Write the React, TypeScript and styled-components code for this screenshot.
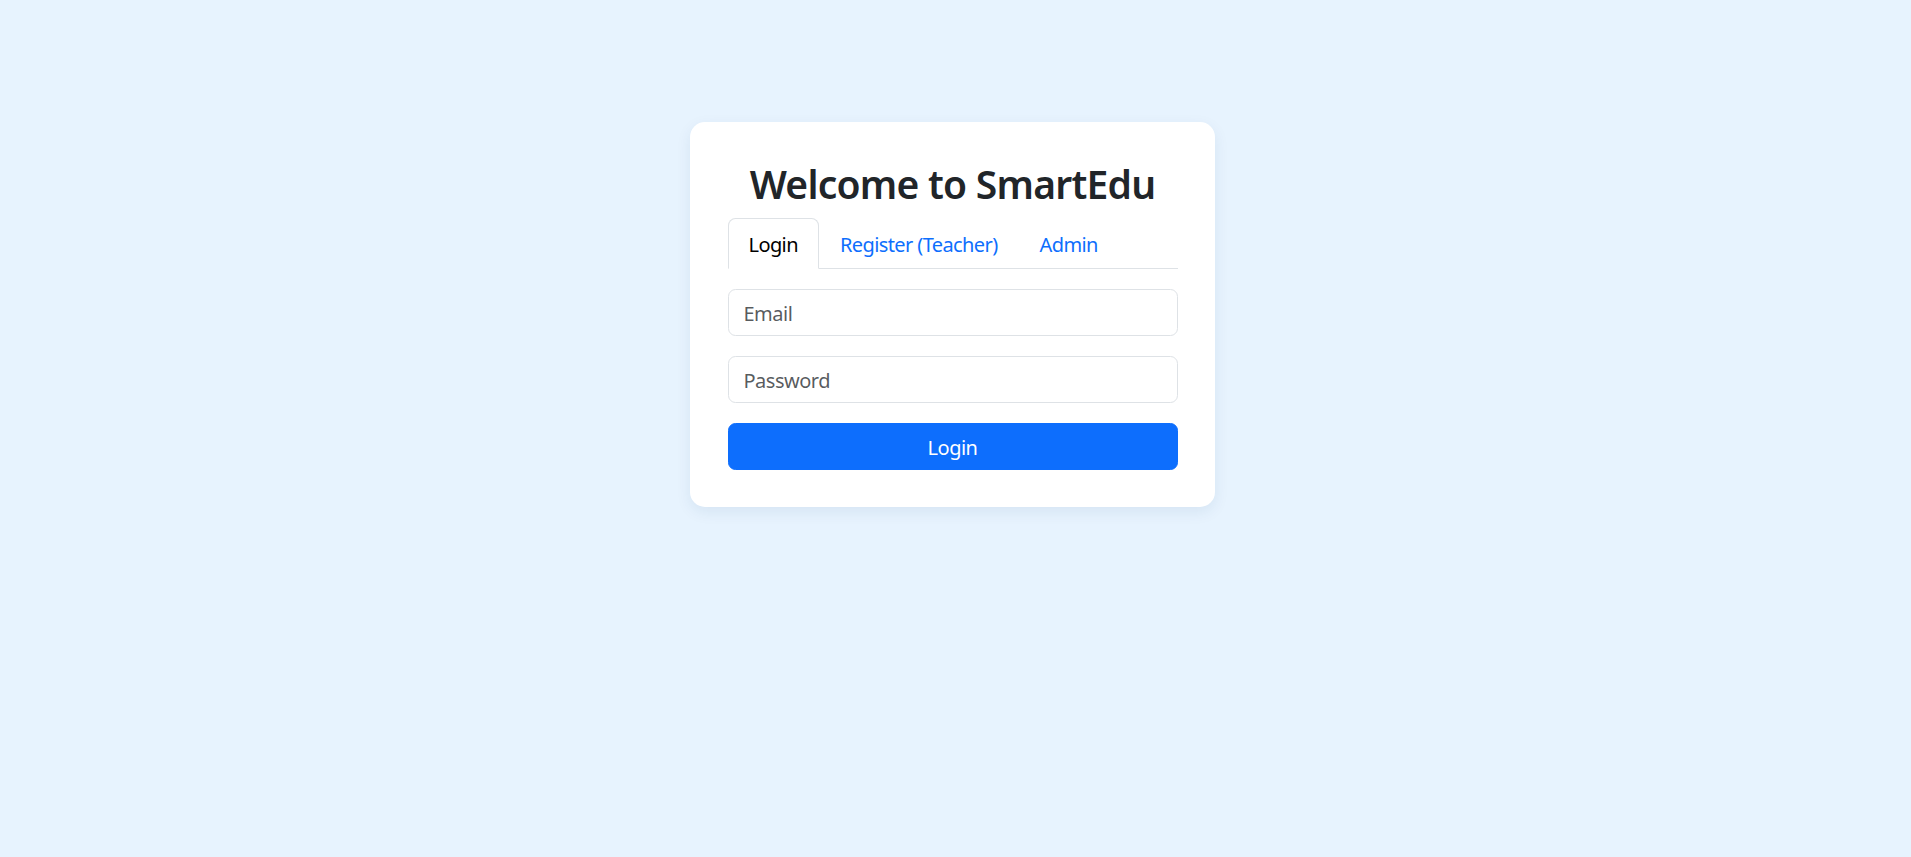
import React, { useState } from "react";
import styled, { createGlobalStyle } from "styled-components";

const GlobalStyle = createGlobalStyle`
  html, body {
    margin: 0;
    padding: 0;
    background: #e7f3fe;
    font-family: "Noto Sans", "Open Sans", Arial, sans-serif;
    color: #212529;
  }
  * { box-sizing: border-box; }
`;

const Page = styled.div`
  min-height: 857px;
  display: flex;
  justify-content: center;
  align-items: flex-start;
  padding-top: 122px;
  padding-right: 6px;
`;

const Card = styled.div`
  width: 525px;
  background: #fff;
  border-radius: 15px;
  padding: 37.5px;
  box-shadow: 0 5px 15px rgba(0, 60, 120, 0.08);
`;

const Title = styled.h2`
  margin: 0 0 10px;
  font-size: 39px;
  line-height: 48px;
  font-weight: 600;
  letter-spacing: -0.75px;
  text-align: center;
  color: #212529;
`;

const Tabs = styled.div`
  display: flex;
  border-bottom: 1px solid #dee2e6;
`;

const Tab = styled.button<{ $active?: boolean }>`
  font-family: inherit;
  font-size: 20px;
  line-height: 30px;
  letter-spacing: -0.6px;
  padding: 11.5px 20px 7.5px;
  margin-bottom: -1px;
  background: ${(p) => (p.$active ? "#fff" : "transparent")};
  color: ${(p) => (p.$active ? "#000" : "#0d6efd")};
  border: 1px solid ${(p) => (p.$active ? "#dee2e6" : "transparent")};
  border-bottom-color: ${(p) => (p.$active ? "#fff" : "transparent")};
  border-radius: 7.5px 7.5px 0 0;
  cursor: pointer;
`;

const Form = styled.form`
  margin-top: 20px;
  display: flex;
  flex-direction: column;
  gap: 20px;
`;

const Input = styled.input`
  width: 100%;
  height: 47px;
  padding: 9px 15px 6px;
  font-family: inherit;
  font-size: 20px;
  letter-spacing: -0.5px;
  color: #212529;
  border: 1px solid #dee2e6;
  border-radius: 7.5px;
  background: #fff;
  outline: none;
  &::placeholder {
    color: rgba(33, 37, 41, 0.75);
  }
`;

const SubmitButton = styled.button`
  width: 100%;
  height: 47px;
  padding: 3px 0 0;
  font-family: inherit;
  font-size: 20px;
  letter-spacing: -0.5px;
  color: #fff;
  background: #0d6efd;
  border: 1px solid #0d6efd;
  border-radius: 7.5px;
  cursor: pointer;
`;

export default function App() {
  const [tab, setTab] = useState("login");
  return (
    <>
      <GlobalStyle />
      <Page>
        <Card>
          <Title>Welcome to SmartEdu</Title>
          <Tabs>
            <Tab $active={tab === "login"} onClick={() => setTab("login")}>Login</Tab>
            <Tab $active={tab === "register"} onClick={() => setTab("register")}>Register (Teacher)</Tab>
            <Tab $active={tab === "admin"} onClick={() => setTab("admin")}>Admin</Tab>
          </Tabs>
          <Form onSubmit={(e) => e.preventDefault()}>
            <Input type="email" placeholder="Email" />
            <Input type="password" placeholder="Password" />
            <SubmitButton type="submit">Login</SubmitButton>
          </Form>
        </Card>
      </Page>
    </>
  );
}
